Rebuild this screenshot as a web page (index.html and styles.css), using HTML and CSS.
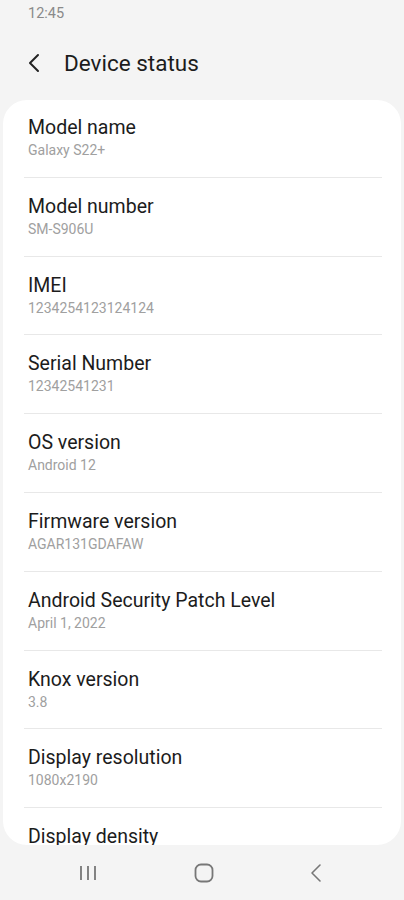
FILE: index.html
```html
<!DOCTYPE html>
<html>
<head>
	<title>Device status</title>
	<link rel="stylesheet" href="styles.css">
</head>
<body>
<div class="status">12:45</div>
<div class="header">
  <svg class="back" width="14" height="20" viewBox="0 0 14 20"><path d="M11 2 L3 10 L11 18" fill="none" stroke="#222" stroke-width="2" stroke-linecap="round" stroke-linejoin="round"/></svg>
  <span>Device status</span>
</div>
<div class="list">
  <div class="row"><div class="t">Model name</div><div class="v">Galaxy S22+</div></div>
  <div class="row"><div class="t">Model number</div><div class="v">SM-S906U</div></div>
  <div class="row"><div class="t">IMEI</div><div class="v">1234254123124124</div></div>
  <div class="row"><div class="t">Serial Number</div><div class="v">12342541231</div></div>
  <div class="row"><div class="t">OS version</div><div class="v">Android 12</div></div>
  <div class="row"><div class="t">Firmware version</div><div class="v">AGAR131GDAFAW</div></div>
  <div class="row"><div class="t">Android Security Patch Level</div><div class="v">April 1, 2022</div></div>
  <div class="row"><div class="t">Knox version</div><div class="v">3.8</div></div>
  <div class="row"><div class="t">Display resolution</div><div class="v">1080x2190</div></div>
  <div class="row last"><div class="t">Display density</div></div>
</div>
<div class="nav">
  <svg width="20" height="16" viewBox="0 0 20 16"><path d="M3 1v14M10 1v14M17 1v14" stroke="#777" stroke-width="1.8"/></svg>
  <svg width="20" height="20" viewBox="0 0 20 20"><rect x="1.5" y="1.5" width="17" height="17" rx="5.5" fill="none" stroke="#777" stroke-width="1.8"/></svg>
  <svg width="12" height="20" viewBox="0 0 12 20"><path d="M10 2 L2 10 L10 18" fill="none" stroke="#777" stroke-width="1.6" stroke-linecap="round" stroke-linejoin="round"/></svg>
</div>
</body>
</html>
```

FILE: styles.css
```css
html,body{margin:0;padding:0;}
body{
  width: 404px;
  height: 900px;
  background: #f4f4f4;
  font-family: Roboto, "Liberation Sans", sans-serif;
  display: flex;
  flex-direction: column;
  overflow: hidden;
}
.status{
  height: 28px;
  padding-left: 28px;
  font-size: 14.5px;
  line-height: 28px;
  color: #8a8a8a;
}
.header{
  height: 72px;
  display: flex;
  align-items: center;
  padding-left: 27px;
  gap: 23px;
  font-size: 22.5px;
  color: #1c1c1c;
  margin-top: -1px;
}
.list{
  flex: 1;
  margin: 1px 3px 0;
  background: #fff;
  border-radius: 24px;
  overflow: hidden;
}
.row{
  margin: 0 19px 0 21px;
  padding: 15px 4px 17.8px;
  border-bottom: 1px solid #e8e8e8;
}
.row + .row{ padding-top: 16px; }
.row.last{ border-bottom: none; }
.t{
  font-size: 19.5px;
  line-height: 26px;
  color: #1c1c1c;
}
.v{
  font-size: 14px;
  line-height: 18px;
  color: #a0a0a0;
}
.nav{
  height: 55px;
  display: flex;
  align-items: center;
  justify-content: space-between;
  padding: 0 82px 0 78px;
}
```
